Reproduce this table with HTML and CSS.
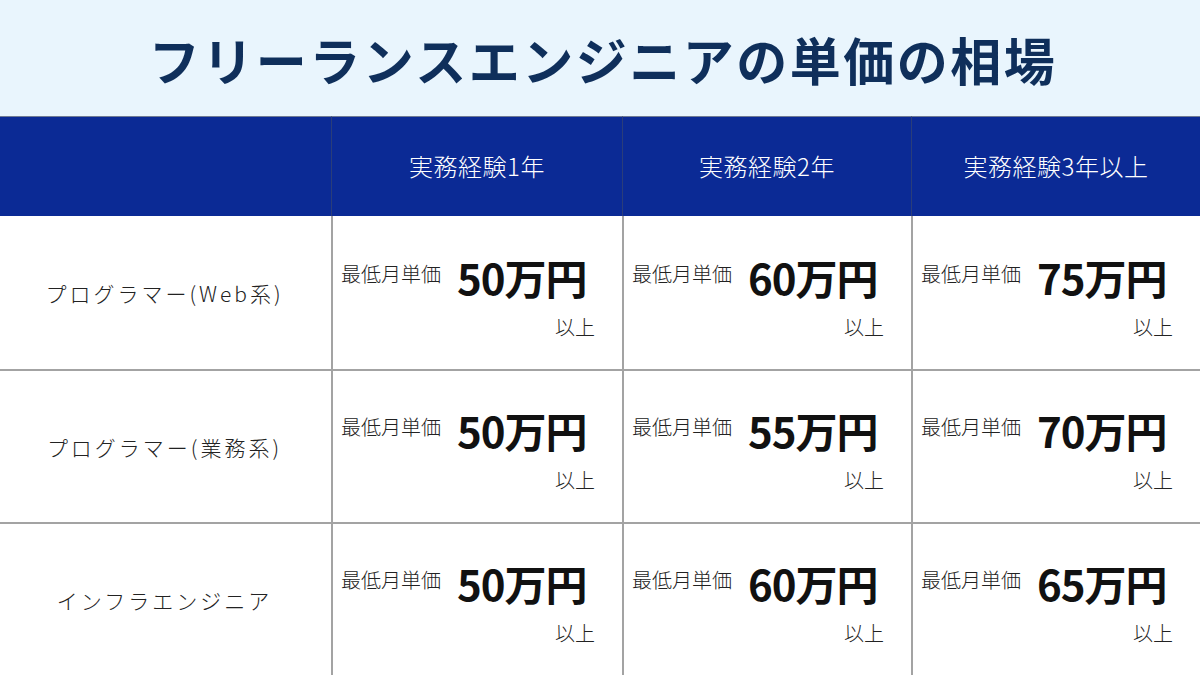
FILE: index.html
```html
<!DOCTYPE html>
<html lang="ja">
<head>
<meta charset="utf-8">
<link rel="stylesheet" href="styles.css">
</head>
<body>
<div class="page">
  <header class="title-band">
    <h1 class="title">フリーランスエンジニアの単価の相場</h1>
  </header>
  <div class="table">
    <div class="th th-empty"></div>
    <div class="th">実務経験1年</div>
    <div class="th">実務経験2年</div>
    <div class="th">実務経験3年以上</div>

    <div class="rowhead">プログラマー(Web系)</div>
    <div class="cell"><div class="line"><span class="lbl">最低月単価</span><span class="price">50万円</span></div><div class="ijo">以上</div></div>
    <div class="cell"><div class="line"><span class="lbl">最低月単価</span><span class="price">60万円</span></div><div class="ijo">以上</div></div>
    <div class="cell"><div class="line"><span class="lbl">最低月単価</span><span class="price">75万円</span></div><div class="ijo">以上</div></div>

    <div class="rowhead">プログラマー(業務系)</div>
    <div class="cell"><div class="line"><span class="lbl">最低月単価</span><span class="price">50万円</span></div><div class="ijo">以上</div></div>
    <div class="cell"><div class="line"><span class="lbl">最低月単価</span><span class="price">55万円</span></div><div class="ijo">以上</div></div>
    <div class="cell"><div class="line"><span class="lbl">最低月単価</span><span class="price">70万円</span></div><div class="ijo">以上</div></div>

    <div class="rowhead">インフラエンジニア</div>
    <div class="cell"><div class="line"><span class="lbl">最低月単価</span><span class="price">50万円</span></div><div class="ijo">以上</div></div>
    <div class="cell"><div class="line"><span class="lbl">最低月単価</span><span class="price">60万円</span></div><div class="ijo">以上</div></div>
    <div class="cell"><div class="line"><span class="lbl">最低月単価</span><span class="price">65万円</span></div><div class="ijo">以上</div></div>
  </div>
</div>
</body>
</html>
```

FILE: styles.css
```css
* { box-sizing: border-box; }
html, body { margin: 0; padding: 0; }
body {
  width: 1200px;
  height: 675px;
  overflow: hidden;
  font-family: "Noto Sans CJK JP", "Noto Sans", sans-serif;
  background: #ffffff;
}
.page { width: 1200px; height: 675px; display: flex; flex-direction: column; }
.title-band {
  height: 116px;
  background: #e9f5fd;
  display: flex;
  align-items: center;
  justify-content: center;
}
.title {
  margin: 0;
  font-size: 51px;
  font-weight: 700;
  letter-spacing: 2.5px;
  color: #0f2f5b;
  line-height: 1;
  padding-top: 2px;
  padding-left: 6px;
  white-space: nowrap;
}
.table {
  flex: 1;
  display: grid;
  grid-template-columns: 331px 291px 289px 289px;
  grid-template-rows: 100px 153px 153px 153px;
}
.th {
  background: #0b2a95;
  color: #ffffff;
  font-size: 24px;
  font-weight: 300;
  letter-spacing: 0.5px;
  display: flex;
  align-items: center;
  justify-content: center;
  border-left: 1px solid #2a3d7a;
  border-top: 1px solid #6f7a94;
  padding-bottom: 2px;
  white-space: nowrap;
}
.th-empty { border-left: none; }
.rowhead {
  display: flex;
  align-items: center;
  justify-content: center;
  font-size: 21px;
  font-weight: 300;
  letter-spacing: 3px;
  color: #222222;
  border-top: 2px solid #a3a3a3;
  padding-right: 2px;
  white-space: nowrap;
}
.table > .rowhead:nth-child(5) { border-top: none; }
.cell {
  border-left: 2px solid #a3a3a3;
  border-top: 2px solid #a3a3a3;
  display: flex;
  flex-direction: column;
  padding: 35px 0 0 8px;
  color: #111111;
  white-space: nowrap;
  min-width: 0;
}
.table > .cell:nth-child(6),
.table > .cell:nth-child(7),
.table > .cell:nth-child(8) { border-top: none; padding-top: 37px; }
.line {
  display: flex;
  align-items: center;
  gap: 16px;
}
.lbl { font-size: 20px; font-weight: 300; color: #222222; line-height: 1; margin-top: -6px; flex: none; }
.price { font-size: 42px; font-weight: 700; line-height: 48px; letter-spacing: -1px; flex: none; }
.ijo {
  align-self: flex-end;
  font-size: 20px;
  font-weight: 300;
  color: #222222;
  margin-top: 11px;
  margin-right: 27px;
}
```
